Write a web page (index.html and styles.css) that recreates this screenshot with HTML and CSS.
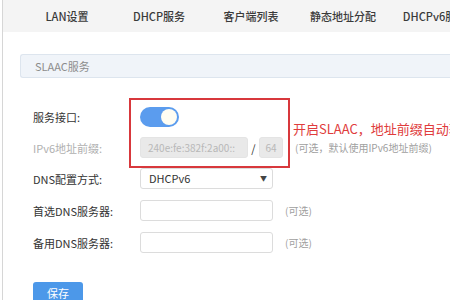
FILE: index.html
```html
<!DOCTYPE html>
<html lang="zh">
<head>
<meta charset="utf-8">
<link rel="stylesheet" href="styles.css">
</head>
<body>
<div class="page">
  <nav class="nav">
    <span class="tab">LAN设置</span>
    <span class="tab">DHCP服务</span>
    <span class="tab">客户端列表</span>
    <span class="tab">静态地址分配</span>
    <span class="tab">DHCPv6服务</span>
  </nav>
  <div class="section-head">SLAAC服务</div>
  <form class="form">
    <div class="row r-toggle">
      <label class="label">服务接口:</label>
      <span class="toggle"><span class="knob"></span></span>
    </div>
    <div class="row">
      <label class="label muted">IPv6地址前缀:</label>
      <span class="input disabled prefix">240e:fe:382f:2a00::</span>
      <span class="slash">/</span>
      <span class="input disabled plen">64</span>
      <span class="hint">(可选，默认使用IPv6地址前缀)</span>
    </div>
    <div class="row">
      <label class="label">DNS配置方式:</label>
      <span class="select">DHCPv6<span class="arrow">▼</span></span>
    </div>
    <div class="row r-dns">
      <label class="label">首选DNS服务器:</label>
      <span class="input wide"></span>
      <span class="hint opt">(可选)</span>
    </div>
    <div class="row r-dns">
      <label class="label">备用DNS服务器:</label>
      <span class="input wide"></span>
      <span class="hint opt">(可选)</span>
    </div>
    <button type="button" class="save">保存</button>
  </form>
  <div class="mark"></div>
  <div class="note">开启SLAAC，地址前缀自动获取</div>
</div>
</body>
</html>
```
FILE: styles.css
```css
* { box-sizing: border-box; }
html, body { margin: 0; padding: 0; background: #fff; }
body {
  font-family: "Noto Sans CJK SC", "Noto Sans", sans-serif;
  font-size: 11px;
  color: #333;
  overflow: hidden;
  width: 450px;
  height: 300px;
}
.page {
  position: relative;
  margin-left: 2px;
  border-left: 1px solid #d6d6d6;
  height: 300px;
}
.nav {
  display: flex;
  height: 32px;
  background: #f4f4f4;
  padding-left: 18px;
  white-space: nowrap;
}
.tab {
  flex: 0 0 92px;
  text-align: center;
  line-height: 32px;
  font-size: 11px;
  color: #3a3a3a;
  font-weight: 500;
}
.section-head {
  margin: 22px 0 0 17px;
  height: 24px;
  border: 1px solid #dde5ee;
  border-right: none;
  border-radius: 3px 0 0 3px;
  background: #f0f4f9;
  padding-left: 14px;
  line-height: 22px;
  color: #8c8c8c;
  font-size: 11px;
}
.form {
  display: flex;
  flex-direction: column;
  gap: 10px;
  padding: 29px 0 0 30px;
  margin: 0;
}
.row {
  display: flex;
  align-items: center;
  height: 21px;
}
.r-toggle { height: 20px; }
.r-dns { margin-top: 1px; }
.label {
  flex: 0 0 107px;
  color: #333;
}
.label.muted { color: #b0b0b0; }
.toggle {
  position: relative;
  width: 39px;
  height: 20px;
  border-radius: 10px;
  background: #5b9cee;
}
.knob {
  position: absolute;
  right: 2px;
  top: 2px;
  width: 16px;
  height: 16px;
  border-radius: 50%;
  background: #fffdf2;
}
.input {
  height: 21px;
  border: 1px solid #dcdcdc;
  border-radius: 3px;
  background: #fff;
  line-height: 19px;
  font-size: 10px;
}
.input.disabled {
  background: #e9e9e9;
  border-color: #e4e4e4;
  color: #b8b8b8;
}
.prefix { width: 108px; padding-left: 7px; }
.slash { width: 11px; text-align: center; color: #333; font-size: 11px; }
.plen { width: 24px; text-align: center; }
.wide { width: 133px; }
.hint {
  margin-left: 12px;
  color: #a0a0a0;
  font-size: 10px;
}
.hint.opt { margin-left: 12px; }
.select {
  position: relative;
  width: 133px;
  height: 21px;
  border: 1px solid #dcdcdc;
  border-radius: 3px;
  padding-left: 8px;
  line-height: 19px;
  font-size: 11px;
  color: #333;
}
.arrow {
  position: absolute;
  right: 5px;
  top: 0;
  font-size: 7px;
  color: #444;
}
.save {
  align-self: flex-start;
  margin-top: 19px;
  width: 50px;
  height: 22px;
  border: none;
  border-radius: 3px;
  background: #4c98e9;
  color: #fff;
  font-family: inherit;
  font-size: 11px;
  padding: 0;
}
.mark {
  position: absolute;
  left: 126px;
  top: 98px;
  width: 161px;
  height: 70px;
  border: 2px solid #d8383c;
}
.note {
  position: absolute;
  left: 290px;
  top: 119px;
  font-size: 13px;
  color: #e03c3c;
  white-space: nowrap;
}
```
